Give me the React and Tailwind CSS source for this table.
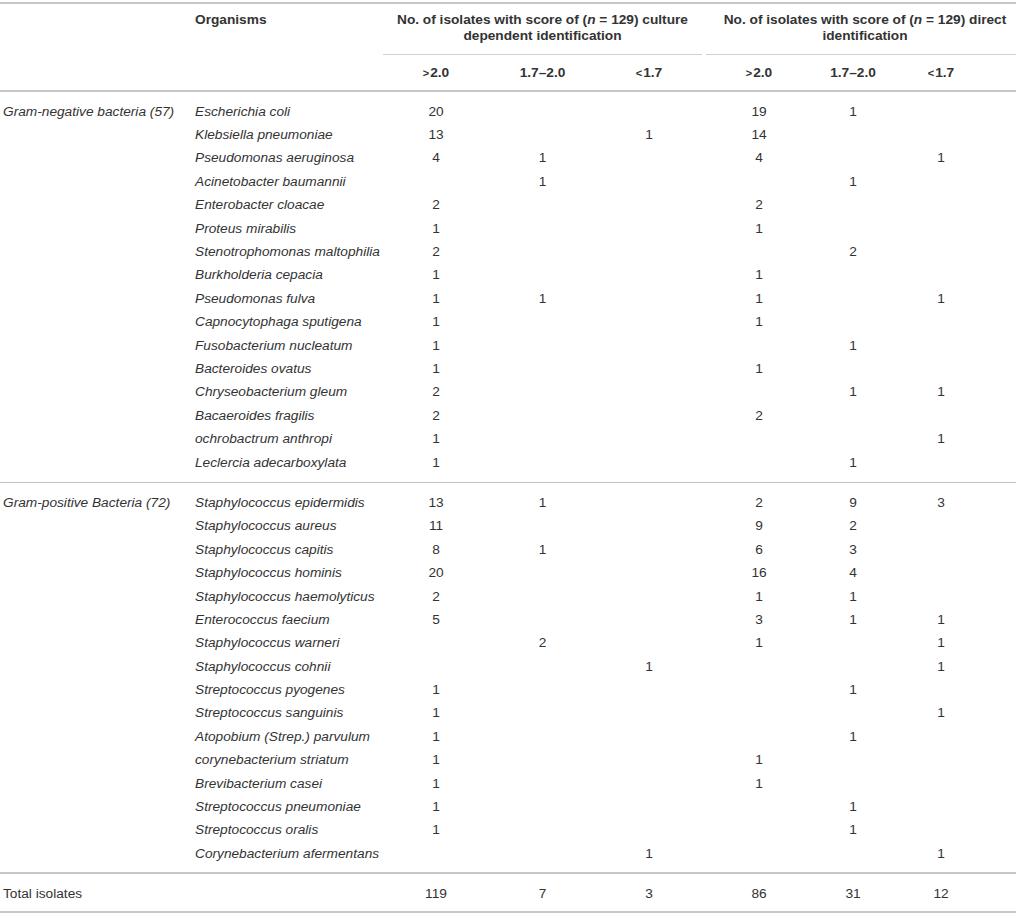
import React from 'react';

const cols = 'grid grid-cols-[195px_188px_106px_107px_110px_106px_82px_122px]';

const gramNegative = [
  ['Escherichia coli', '20', '', '', '19', '1', ''],
  ['Klebsiella pneumoniae', '13', '', '1', '14', '', ''],
  ['Pseudomonas aeruginosa', '4', '1', '', '4', '', '1'],
  ['Acinetobacter baumannii', '', '1', '', '', '1', ''],
  ['Enterobacter cloacae', '2', '', '', '2', '', ''],
  ['Proteus mirabilis', '1', '', '', '1', '', ''],
  ['Stenotrophomonas maltophilia', '2', '', '', '', '2', ''],
  ['Burkholderia cepacia', '1', '', '', '1', '', ''],
  ['Pseudomonas fulva', '1', '1', '', '1', '', '1'],
  ['Capnocytophaga sputigena', '1', '', '', '1', '', ''],
  ['Fusobacterium nucleatum', '1', '', '', '', '1', ''],
  ['Bacteroides ovatus', '1', '', '', '1', '', ''],
  ['Chryseobacterium gleum', '2', '', '', '', '1', '1'],
  ['Bacaeroides fragilis', '2', '', '', '2', '', ''],
  ['ochrobactrum anthropi', '1', '', '', '', '', '1'],
  ['Leclercia adecarboxylata', '1', '', '', '', '1', ''],
];

const gramPositive = [
  ['Staphylococcus epidermidis', '13', '1', '', '2', '9', '3'],
  ['Staphylococcus aureus', '11', '', '', '9', '2', ''],
  ['Staphylococcus capitis', '8', '1', '', '6', '3', ''],
  ['Staphylococcus hominis', '20', '', '', '16', '4', ''],
  ['Staphylococcus haemolyticus', '2', '', '', '1', '1', ''],
  ['Enterococcus faecium', '5', '', '', '3', '1', '1'],
  ['Staphylococcus warneri', '', '2', '', '1', '', '1'],
  ['Staphylococcus cohnii', '', '', '1', '', '', '1'],
  ['Streptococcus pyogenes', '1', '', '', '', '1', ''],
  ['Streptococcus sanguinis', '1', '', '', '', '', '1'],
  ['Atopobium (Strep.) parvulum', '1', '', '', '', '1', ''],
  ['corynebacterium striatum', '1', '', '', '1', '', ''],
  ['Brevibacterium casei', '1', '', '', '1', '', ''],
  ['Streptococcus pneumoniae', '1', '', '', '', '1', ''],
  ['Streptococcus oralis', '1', '', '', '', '1', ''],
  ['Corynebacterium afermentans', '', '', '1', '', '', '1'],
];

// centring tweaks so numbers sit under their headers
const numPad = ['', '', 'pr-[4px]', '', '', 'pr-[28px]'];

const Gt = () => <span className="text-[11px] mr-[1px]">&gt;</span>;
const Lt = () => <span className="text-[11px] mr-[1px]">&lt;</span>;

const Row = ({ group, cells }) => (
  <div className={`${cols} h-[23.4px] items-center`}>
    <div className="pl-[3px] italic whitespace-nowrap">{group}</div>
    <div className="italic whitespace-nowrap">{cells[0]}</div>
    {cells.slice(1).map((v, i) => (
      <div key={i} className={`text-center ${numPad[i]}`}>
        {v}
      </div>
    ))}
  </div>
);

const App = () => {
  return (
    <div className="w-[1016px] h-[915px] bg-white pt-[2px] font-['Liberation_Sans',Arial,sans-serif] text-[13.7px] leading-[16px] text-[#333]">
      {/* Header */}
      <div className="border-t-2 border-b-2 border-[#c8c8c8] font-bold">
        <div className={`${cols} items-start`}>
          <div />
          <div className="pt-[8px]">Organisms</div>
          <div className="col-span-3 pr-[4px]">
            <div className="pt-[8px] pb-[10px] text-center border-b border-[#d2d2d2]">
              No. of isolates with score of (<span className="italic">n</span> = 129) culture dependent identification
            </div>
          </div>
          <div className="col-span-3">
            <div className="pt-[8px] pb-[10px] pl-[8px] text-center border-b border-[#d2d2d2]">
              No. of isolates with score of (<span className="italic">n</span> = 129) direct identification
            </div>
          </div>
        </div>
        <div className={`${cols} h-[35px] items-center`}>
          <div />
          <div />
          <div className="text-center"><Gt />2.0</div>
          <div className="text-center">1.7–2.0</div>
          <div className="text-center pr-[4px]"><Lt />1.7</div>
          <div className="text-center"><Gt />2.0</div>
          <div className="text-center">1.7–2.0</div>
          <div className="text-center pr-[28px]"><Lt />1.7</div>
        </div>
      </div>

      {/* Gram-negative */}
      <div className="pt-[8px] pb-[8px] border-b border-[#c2c2c2]">
        {gramNegative.map((r, i) => (
          <Row key={r[0]} group={i === 0 ? 'Gram-negative bacteria (57)' : ''} cells={r} />
        ))}
      </div>

      {/* Gram-positive */}
      <div className="pt-[8px] pb-[6.6px] border-b-2 border-[#c8c8c8]">
        {gramPositive.map((r, i) => (
          <Row key={r[0]} group={i === 0 ? 'Gram-positive Bacteria (72)' : ''} cells={r} />
        ))}
      </div>

      {/* Totals */}
      <div className={`${cols} pt-[12px] pb-[9px] border-b-2 border-[#c8c8c8]`}>
        <div className="pl-[3px]">Total isolates</div>
        <div />
        <div className="text-center">119</div>
        <div className="text-center">7</div>
        <div className="text-center pr-[4px]">3</div>
        <div className="text-center">86</div>
        <div className="text-center">31</div>
        <div className="text-center pr-[28px]">12</div>
      </div>
    </div>
  );
};

export default App;
